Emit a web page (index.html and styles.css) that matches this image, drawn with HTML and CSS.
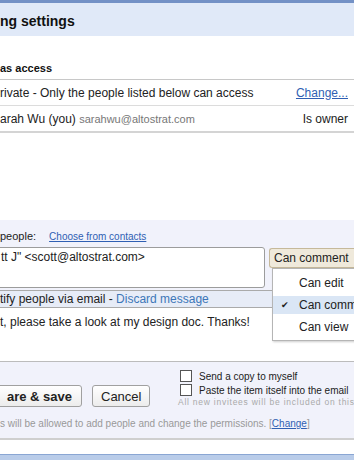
FILE: index.html
```html
<!DOCTYPE html>
<html>
<head>
<meta charset="utf-8">
<link rel="stylesheet" href="styles.css">
</head>
<body>
<div class="dialog">
  <div class="topbar"></div>
  <div class="header"><h1 class="title">ng settings</h1></div>
  <div class="access">
    <h2 class="sub">as access</h2>
    <div class="row row-first">
      <span>rivate - Only the people listed below can access</span>
      <a class="link change">Change...</a>
    </div>
    <div class="row row-owner">
      <span>arah Wu (you) <span class="email">sarahwu@altostrat.com</span></span>
      <span class="owner">Is owner</span>
    </div>
  </div>
  <div class="blank"></div>
  <div class="add">
    <div class="label-row">
      <span>people:</span>
      <a class="link contacts">Choose from contacts</a>
    </div>
    <div class="entry">
      <div class="textarea">tt J" &lt;scott@altostrat.com&gt;</div>
      <div class="perm">
        <div class="perm-btn">Can comment</div>
        <div class="menu">
          <div class="item">Can edit</div>
          <div class="item selected"><span class="check">&#10004;</span>Can comm</div>
          <div class="item">Can view</div>
        </div>
      </div>
    </div>
    <div class="notify">tify people via email - <a class="link discard">Discard message</a></div>
  </div>
  <div class="message">t, please take a look at my design doc. Thanks!</div>
  <div class="actions">
    <div class="actions-main">
      <div class="buttons">
        <button class="btn btn-primary">are &amp; save</button>
        <button class="btn">Cancel</button>
      </div>
      <div class="options">
        <label class="opt"><span class="box"></span>Send a copy to myself</label>
        <label class="opt"><span class="box"></span>Paste the item itself into the email</label>
        <div class="hint">All new invitees will be included on this</div>
      </div>
    </div>
    <div class="note">s will be allowed to add people and change the permissions. [<a class="link note-link">Change</a>]</div>
  </div>
  <div class="footer-gap"></div>
  <div class="bottombar"></div>
</div>
</body>
</html>
```

FILE: styles.css
```css
html, body {
  margin: 0;
  padding: 0;
  width: 354px;
  height: 460px;
  overflow: hidden;
  background: #ffffff;
  font-family: "Liberation Sans", Arial, sans-serif;
  color: #222;
}

.dialog {
  width: 354px;
  height: 460px;
  display: flex;
  flex-direction: column;
  position: relative;
  overflow: hidden;
}

.topbar {
  height: 3px;
  background: #7391c6;
  flex: none;
}

.header {
  height: 33px;
  flex: none;
  background: #e0e9f8;
  display: flex;
  align-items: center;
}

.title {
  margin: 0;
  font-size: 14px;
  font-weight: bold;
  color: #111;
  margin-top: 2px;
}

.access {
  flex: none;
  padding-top: 24px;
}

.sub {
  margin: 0;
  font-size: 11px;
  font-weight: bold;
  color: #111;
  height: 19px;
  line-height: 16px;
  border-bottom: 1px solid #c8c8c8;
}

.row {
  display: flex;
  justify-content: space-between;
  align-items: center;
  font-size: 12px;
  color: #222;
}

.row-first {
  height: 25px;
  border-bottom: 1px solid #dcdcdc;
}

.row-owner {
  height: 25px;
  border-bottom: 2px solid #d4d4d4;
}

.link {
  color: #2f5fb3;
  text-decoration: underline;
  cursor: pointer;
}

.change {
  margin-right: 6px;
}

.email {
  color: #777;
  font-size: 11px;
}

.owner {
  margin-right: 6px;
}

.blank {
  height: 87px;
  flex: none;
}

.add {
  background: #f1f2fb;
  flex: none;
  padding-top: 10px;
}

.label-row {
  font-size: 11px;
  color: #222;
  display: flex;
  gap: 13px;
  align-items: baseline;
  height: 16px;
}

.contacts {
  font-size: 10px;
}

.entry {
  display: flex;
  gap: 4px;
  align-items: flex-start;
  margin-top: 1px;
}

.textarea {
  width: 269px;
  height: 41px;
  flex: none;
  margin-left: -4px;
  padding-left: 4px;
  box-sizing: border-box;
  background: #fff;
  border: 1px solid #9c9c9c;
  border-radius: 3px;
  font-size: 12px;
  line-height: 16px;
  color: #222;
  padding-top: 1px;
}

.perm {
  position: relative;
  flex: 1;
}

.perm-btn {
  height: 20px;
  box-sizing: border-box;
  margin-top: 1px;
  background: #efe9db;
  border: 1px solid #c6b99a;
  border-right: none;
  border-radius: 3px 0 0 3px;
  font-size: 12px;
  line-height: 18px;
  padding-left: 4px;
  color: #222;
  white-space: nowrap;
}

.menu {
  position: absolute;
  left: 3px;
  top: 21px;
  width: 100px;
  height: 73px;
  box-sizing: border-box;
  background: #fff;
  border: 1px solid #b5b5b5;
  box-shadow: 1px 1px 2px rgba(0,0,0,0.2);
  padding-top: 3px;
  z-index: 5;
}

.item {
  height: 22px;
  line-height: 22px;
  font-size: 12px;
  color: #222;
  padding-left: 26px;
  position: relative;
  white-space: nowrap;
}

.item.selected {
  background: #dae6f5;
  height: 18px;
  line-height: 18px;
  margin: 2px 0;
}

.check {
  position: absolute;
  left: 8px;
  font-size: 9px;
  color: #222;
}

.notify {
  margin-top: 2px;
  height: 18px;
  box-sizing: border-box;
  width: 272px;
  background: #e7ecf7;
  border-top: 1px solid #aaa;
  border-bottom: 1px solid #aaa;
  font-size: 12px;
  line-height: 16px;
  color: #222;
  white-space: nowrap;
}

.discard {
  text-decoration: none;
  color: #3d77b8;
}

.message {
  flex: none;
  height: 54px;
  font-size: 12px;
  line-height: 14px;
  padding-top: 7px;
  box-sizing: border-box;
  color: #222;
  background: #fff;
  border-bottom: 1px solid #bcbcbc;
}

.actions {
  flex: none;
  height: 78px;
  background: #f1f2fb;
  border-bottom: 2px solid #cfcfcf;
  box-sizing: border-box;
}

.actions-main {
  display: flex;
  align-items: flex-start;
  padding-top: 7px;
  height: 50px;
  box-sizing: border-box;
}

.buttons {
  display: flex;
  gap: 10px;
  padding-top: 16px;
  width: 178px;
  flex: none;
}

.btn {
  font-family: "Liberation Sans", Arial, sans-serif;
  font-size: 13px;
  height: 22px;
  border: 1px solid #a0a0a0;
  border-radius: 3px;
  background: linear-gradient(#ffffff, #ececec);
  color: #222;
  padding: 0 8px;
}

.btn-primary {
  font-weight: bold;
  margin-left: -10px;
  width: 92px;
  text-align: right;
  padding-left: 0;
  padding-right: 9px;
}

.options {
  display: flex;
  flex-direction: column;
  flex: 1;
  min-width: 0;
  white-space: nowrap;
}

.opt {
  display: flex;
  align-items: center;
  gap: 7px;
  font-size: 10px;
  height: 14px;
  color: #222;
  margin-left: 2px;
  white-space: nowrap;
}

.box {
  width: 10px;
  height: 10px;
  border: 1px solid #555;
  background: #fff;
  flex: none;
}

.hint {
  font-size: 8.5px;
  line-height: 10px;
  color: #aaa;
  letter-spacing: 0.75px;
  margin-top: 0;
  white-space: nowrap;
}

.note {
  font-size: 10px;
  line-height: 12px;
  color: #999;
  padding-top: 6px;
  white-space: nowrap;
}

.note-link {
  color: #2f5fb3;
}

.footer-gap {
  height: 14px;
  flex: none;
}

.bottombar {
  flex: 1;
  background: #b9cce9;
  border-top: 1px solid #8aa6d3;
}
```
